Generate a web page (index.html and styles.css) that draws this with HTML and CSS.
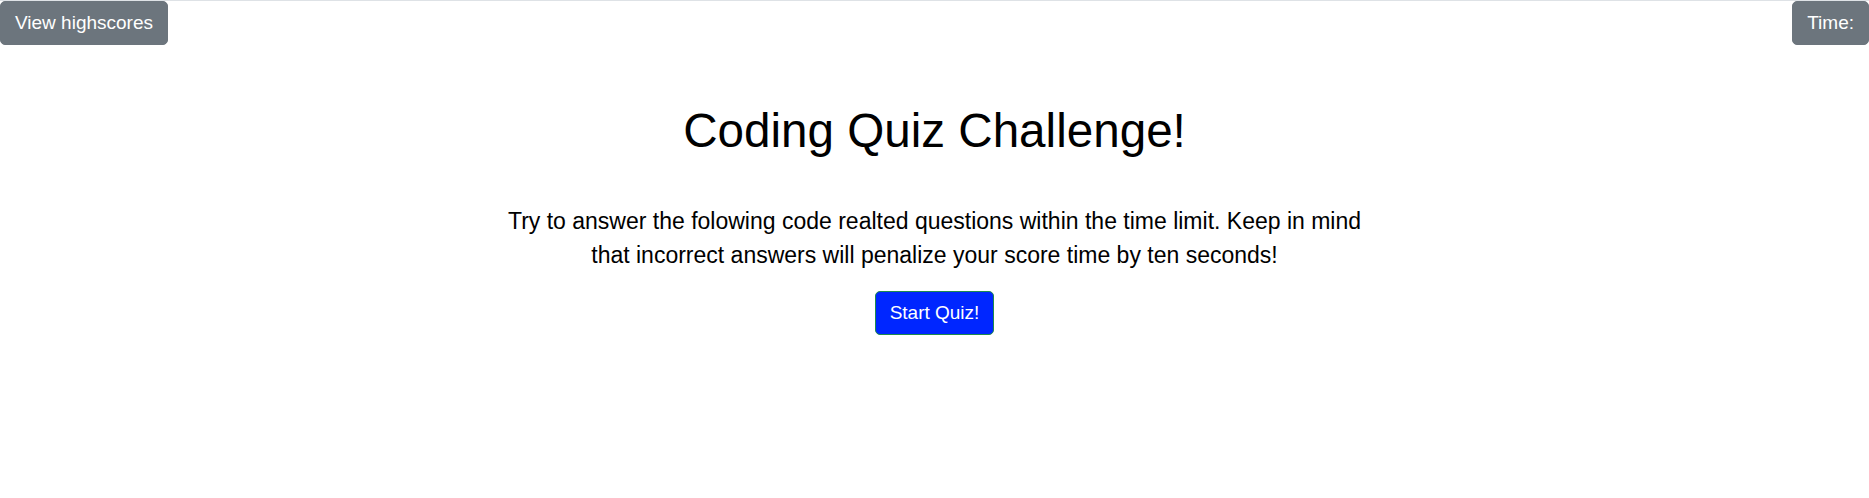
FILE: index.html
```html
<!DOCTYPE html>
<html lang="en">
<head>
<meta charset="utf-8">
<title>Coding Quiz</title>
<link rel="stylesheet" href="styles.css">
</head>
<body>
<header class="topbar">
  <button class="btn btn-secondary">View highscores</button>
  <button class="btn btn-secondary">Time:</button>
</header>
<main class="intro">
  <h1 class="title">Coding Quiz Challenge!</h1>
  <p class="lead">Try to answer the folowing code realted questions within the time limit. Keep in mind that incorrect answers will penalize your score time by ten seconds!</p>
  <button class="btn btn-start">Start Quiz!</button>
</main>
</body>
</html>
```
FILE: styles.css
```css
* { box-sizing: border-box; }
html, body { margin: 0; padding: 0; }
body {
  font-family: "Liberation Sans", Arial, sans-serif;
  color: #000;
  background: #fff;
  border-top: 1px solid #dee2e6;
}
.topbar {
  display: flex;
  justify-content: space-between;
  align-items: flex-start;
}
.btn {
  font-family: inherit;
  font-size: 19px;
  line-height: 28px;
  padding: 7px 14px;
  border: 1px solid transparent;
  border-radius: 5px;
  color: #fff;
  cursor: pointer;
}
.btn-secondary {
  background: #6c757d;
  border-color: #6c757d;
}
.intro {
  display: flex;
  flex-direction: column;
  align-items: center;
  text-align: center;
  padding-top: 57px;
}
.title {
  font-size: 47.6px;
  font-weight: 400;
  line-height: 57px;
  margin: 0 0 45px;
}
.lead {
  font-size: 23px;
  line-height: 34px;
  max-width: 880px;
  margin: 0 0 19px;
}
.btn-start {
  background: #0026ff;
  border-color: #1f8a4c;
}
```
